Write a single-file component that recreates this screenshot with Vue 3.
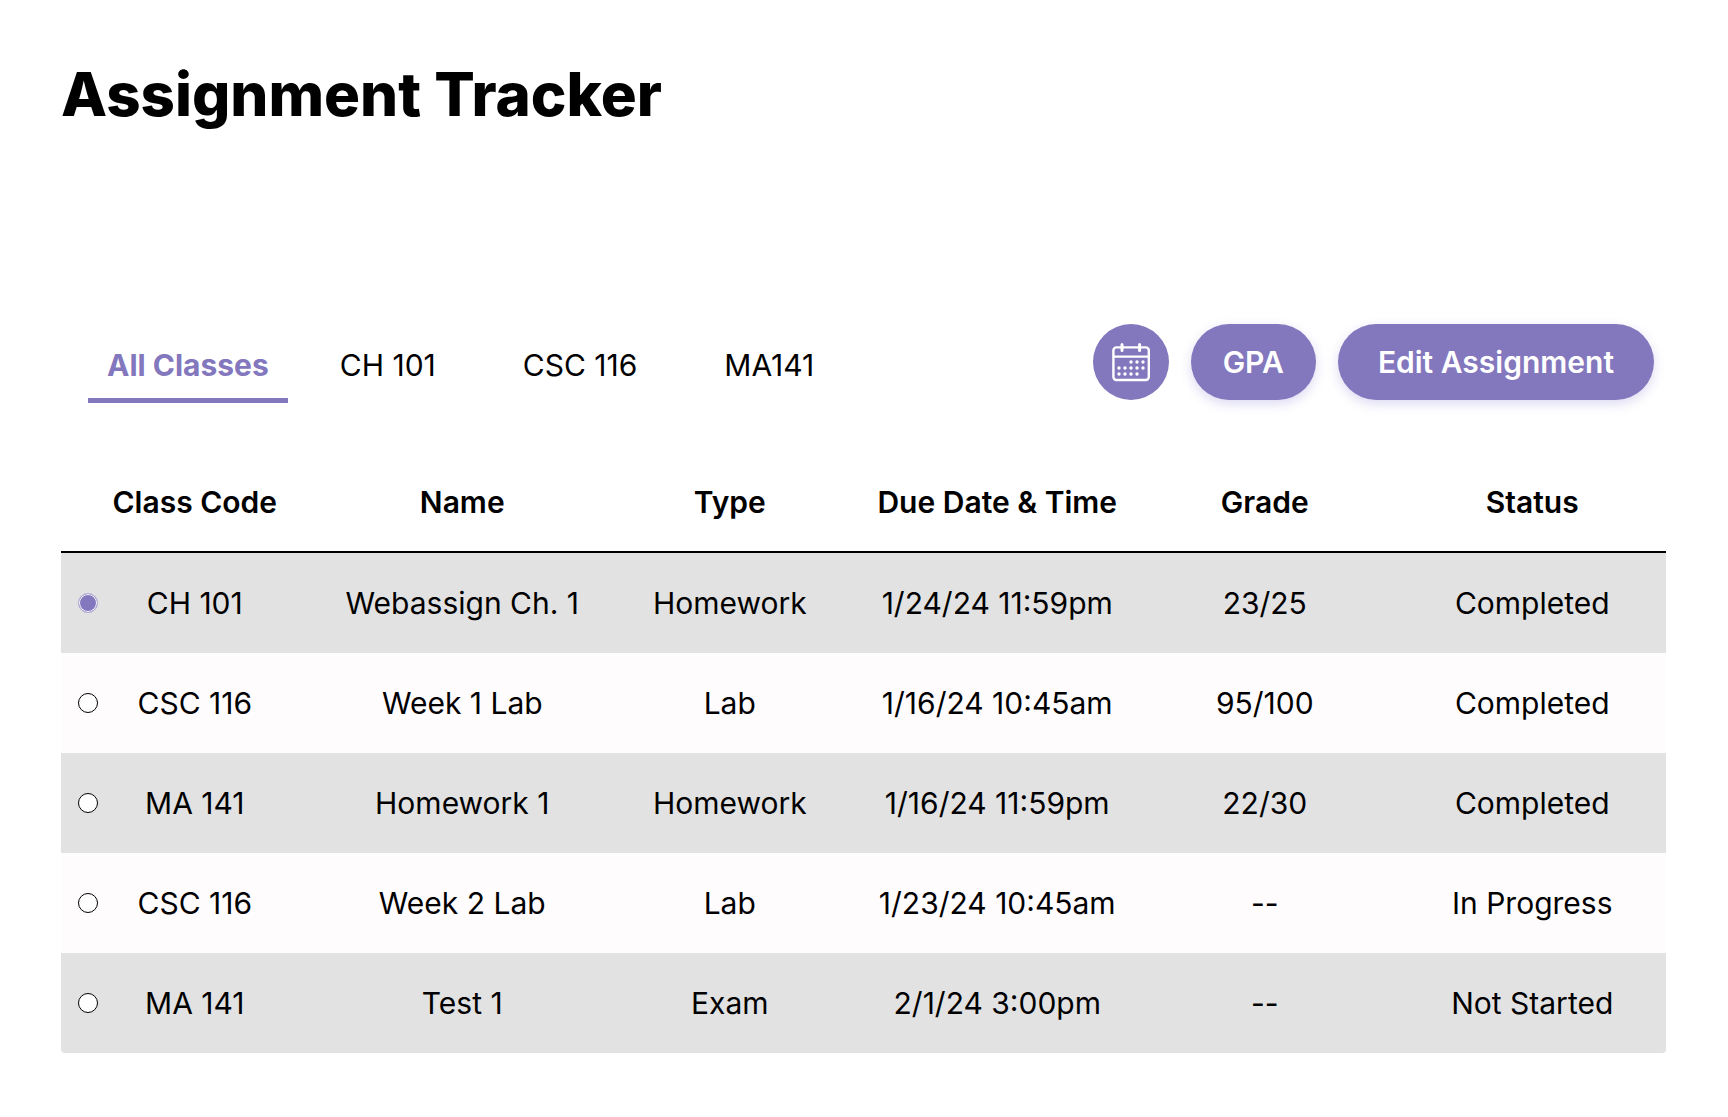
<script setup>
import { ref } from 'vue'

const tabs = ['All Classes', 'CH 101', 'CSC 116', 'MA141']
const activeTab = ref('All Classes')

const columns = ['Class Code', 'Name', 'Type', 'Due Date & Time', 'Grade', 'Status']

const assignments = [
  { id: 1, code: 'CH 101', name: 'Webassign Ch. 1', type: 'Homework', due: '1/24/24 11:59pm', grade: '23/25', status: 'Completed' },
  { id: 2, code: 'CSC 116', name: 'Week 1 Lab', type: 'Lab', due: '1/16/24 10:45am', grade: '95/100', status: 'Completed' },
  { id: 3, code: 'MA 141', name: 'Homework 1', type: 'Homework', due: '1/16/24 11:59pm', grade: '22/30', status: 'Completed' },
  { id: 4, code: 'CSC 116', name: 'Week 2 Lab', type: 'Lab', due: '1/23/24 10:45am', grade: '--', status: 'In Progress' },
  { id: 5, code: 'MA 141', name: 'Test 1', type: 'Exam', due: '2/1/24 3:00pm', grade: '--', status: 'Not Started' }
]
const selected = ref(1)

const dots = [
  [38, 38], [44, 38], [50, 38],
  [26, 44], [32, 44], [38, 44], [44, 44], [50, 44],
  [26, 50], [32, 50], [38, 50], [44, 50]
]
</script>

<template>
  <main class="page">
    <h1 class="title">Assignment Tracker</h1>

    <div class="toolbar">
      <nav class="tabs" aria-label="Classes">
        <button
          v-for="tab in tabs"
          :key="tab"
          type="button"
          class="tab"
          :class="{ active: tab === activeTab }"
          @click="activeTab = tab"
        >{{ tab }}</button>
      </nav>
      <div class="actions">
        <button type="button" class="round" aria-label="Calendar">
          <svg viewBox="0 0 76 76" width="76" height="76" fill="none" stroke="#fff" aria-hidden="true">
            <rect x="20.4" y="23.4" width="35.4" height="32.6" rx="3" stroke-width="2.4" />
            <path d="M20.4 32.6H55.8" stroke-width="2.4" />
            <path d="M29 20.4V26.4M46.6 20.4V26.4" stroke-width="3" stroke-linecap="round" />
            <g fill="#fff" stroke="none">
              <circle v-for="([x, y], i) in dots" :key="i" :cx="x" :cy="y" r="1.7" />
            </g>
          </svg>
        </button>
        <button type="button" class="pill compact">GPA</button>
        <button type="button" class="pill">Edit Assignment</button>
      </div>
    </div>

    <table class="grid">
      <thead>
        <tr>
          <th v-for="column in columns" :key="column" scope="col">{{ column }}</th>
        </tr>
      </thead>
      <tbody>
        <tr v-for="item in assignments" :key="item.id">
          <td>
            <label class="pick">
              <input v-model="selected" type="radio" name="assignment" :value="item.id" />
              <span>{{ item.code }}</span>
            </label>
          </td>
          <td>{{ item.name }}</td>
          <td>{{ item.type }}</td>
          <td>{{ item.due }}</td>
          <td>{{ item.grade }}</td>
          <td>{{ item.status }}</td>
        </tr>
      </tbody>
    </table>
  </main>
</template>

<style>
body {
  margin: 0;
  background: #fff;
}
</style>

<style scoped>
.page {
  padding: 58px 62px 64px 61px;
  font-family: Inter, "Liberation Sans", sans-serif;
  font-size: 30px;
  line-height: 36px;
  color: #000;
}

.title {
  margin: 0;
  font-size: 60px;
  line-height: 72px;
  font-weight: 800;
}

.toolbar {
  display: flex;
  justify-content: space-between;
  align-items: flex-start;
  margin-top: 194px;
  padding: 0 12px 0 27px;
}

.tabs {
  display: flex;
  gap: 17px;
}

button {
  border: 0;
  font: inherit;
  cursor: pointer;
}

.tab {
  padding: 23px 35px 15px;
  border-bottom: 5px solid transparent;
  background: none;
  color: #000;
  white-space: nowrap;
}

.tab.active {
  padding-right: 19px;
  padding-left: 19px;
  border-bottom-color: #8377bd;
  color: #8377bd;
  font-weight: 700;
}

.actions {
  display: flex;
  gap: 22px;
}

.round,
.pill {
  height: 76px;
  border-radius: 38px;
  background: #8377bd;
  color: #fff;
}

.round {
  width: 76px;
  padding: 0;
}

.round svg {
  display: block;
}

.pill {
  padding: 0 40px;
  font-weight: 600;
  white-space: nowrap;
  box-shadow: 0 4px 12px rgba(80, 70, 190, 0.2);
}

.pill.compact {
  padding: 0 32px;
}

.grid {
  width: 100%;
  margin-top: 50px;
  table-layout: fixed;
  border-collapse: separate;
  border-spacing: 0;
  text-align: center;
}

th {
  height: 98px;
  padding: 0;
  border-bottom: 2px solid #000;
  font-weight: 600;
}

td {
  height: 100px;
  padding: 0;
  background: #fffcfe;
}

tbody tr:nth-child(odd) td {
  background: #e2e2e2;
}

tbody tr:last-child td:first-child {
  border-bottom-left-radius: 4px;
}

tbody tr:last-child td:last-child {
  border-bottom-right-radius: 4px;
}

.pick {
  display: grid;
  grid-template-columns: 1fr auto 1fr;
  align-items: center;
}

.pick input {
  appearance: none;
  box-sizing: border-box;
  width: 20px;
  height: 20px;
  margin: 0 0 0 17px;
  border: 1px solid #000;
  border-radius: 50%;
  background: #fff;
}

.pick input:checked {
  border-color: #b4add8;
  background: #8377bd;
  box-shadow: inset 0 0 0 1px #fff;
}
</style>
